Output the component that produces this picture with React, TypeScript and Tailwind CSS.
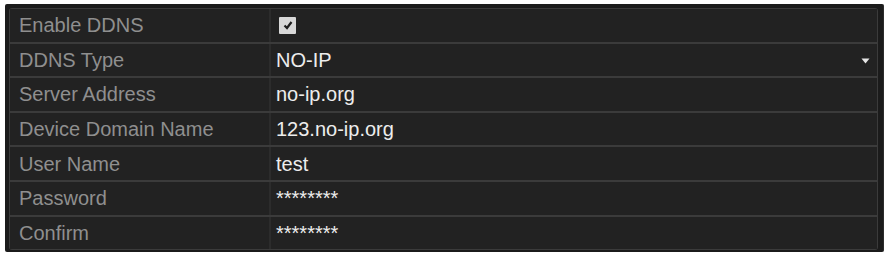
import React from "react";

const rows: { label: string; value?: string; type: "check" | "select" | "text" }[] = [
  { label: "Enable DDNS", type: "check" },
  { label: "DDNS Type", value: "NO-IP", type: "select" },
  { label: "Server Address", value: "no-ip.org", type: "text" },
  { label: "Device Domain Name", value: "123.no-ip.org", type: "text" },
  { label: "User Name", value: "test", type: "text" },
  { label: "Password", value: "********", type: "text" },
  { label: "Confirm", value: "********", type: "text" },
];

export default function App() {
  return (
    <div className="w-[887px] h-[256px] bg-white pt-[4px] pl-[5px]" style={{ fontFamily: '"Liberation Sans", Arial, sans-serif' }}>
      <div className="w-[879px] h-[248px] bg-[#1b1b1b] pt-[4px] pl-[4px] pr-[6px] rounded-[2px] border-r border-[#2c2c2c]">
        <div className="w-[869px] bg-[#3b3b3b] p-[1px] flex flex-col gap-[2px] rounded-[3px]">
          {rows.map((r) => (
            <div key={r.label} className="flex h-[32.6px] bg-[#222222]">
              <div className="w-[261px] shrink-0 flex items-center pl-[9px] text-[20px] text-[#8f8f8f] border-r-2 border-[#2c2c2c] leading-none">
                {r.label}
              </div>
              <div className="flex-1 flex items-center pl-[5px] pr-[7px] text-[20px] text-[#ededed] leading-none">
                {r.type === "check" ? (
                  <div className="w-[17px] h-[17px] ml-[3px] bg-[#d8d8d8] rounded-[1px] flex items-center justify-center">
                    <svg width="12" height="12" viewBox="0 0 12 12">
                      <path d="M2.5 6.5 L5 9 L9.5 3" stroke="#1e1e1e" strokeWidth="2.2" fill="none" />
                    </svg>
                  </div>
                ) : (
                  <span>{r.value}</span>
                )}
                {r.type === "select" && (
                  <svg className="ml-auto mt-[3px]" width="9" height="6" viewBox="0 0 9 6">
                    <path d="M0.5 0.5 L8.5 0.5 L4.5 5.5 Z" fill="#e6e6e6" />
                  </svg>
                )}
              </div>
            </div>
          ))}
        </div>
      </div>
    </div>
  );
}
